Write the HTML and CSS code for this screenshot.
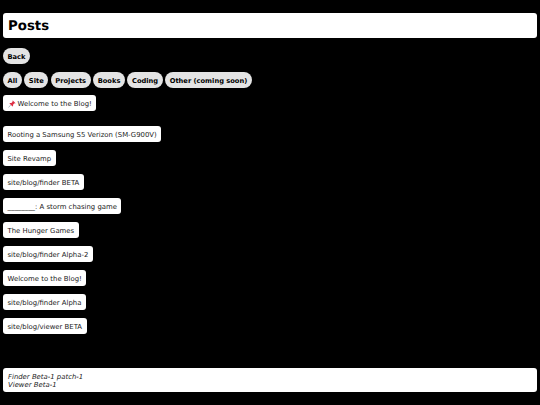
FILE: index.html
```html
<!DOCTYPE html>
<html lang="en">
    <head>
        <meta charset="UTF-8">
        <meta name="viewport" content="width=device-width, initial-scale=1.0">
        <title>Posts</title>
        <link rel="stylesheet" href="styles.css">
    </head>
    <body>
        <header class="title"><h1>Posts</h1></header>
        <nav class="back">
            <button class="pill">Back</button>
        </nav>
        <nav class="filters">
            <button class="pill">All</button>
            <button class="pill">Site</button>
            <button class="pill">Projects</button>
            <button class="pill">Books</button>
            <button class="pill">Coding</button>
            <button class="pill">Other (coming soon)</button>
        </nav>
        <div class="posts posts--pinned">
            <a class="post">
                <svg class="pin" viewBox="0 0 12 12" width="8" height="8">
                    <path d="M7.2 0.6 L11.4 4.8 L10.4 5.4 L9.5 5 L7.6 7 L7.6 9 L6.8 9.8 L2.2 5.2 L3 4.4 L5 4.4 L7 2.5 L6.6 1.6 Z" fill="#dd2e44"/>
                    <path d="M4 7.6 L0.8 11.2" stroke="#99aab5" stroke-width="1.2" fill="none"/>
                </svg>
                Welcome to the Blog!
            </a>
        </div>
        <div class="posts">
            <a class="post">Rooting a Samsung S5 Verizon (SM-G900V)</a>
            <a class="post">Site Revamp</a>
            <a class="post">site/blog/finder BETA</a>
            <a class="post">________: A storm chasing game</a>
            <a class="post">The Hunger Games</a>
            <a class="post">site/blog/finder Alpha-2</a>
            <a class="post">Welcome to the Blog!</a>
            <a class="post">site/blog/finder Alpha</a>
            <a class="post">site/blog/viewer BETA</a>
        </div>
        <footer class="versions">
            <em>Finder Beta-1 patch-1</em>
            <em>Viewer Beta-1</em>
        </footer>
    </body>
</html>
```
FILE: styles.css
```css
* {
    box-sizing: border-box;
}

html {
    background: #000;
}

body {
    margin: 0;
    padding: 13px 3px 0;
    height: 405px;
    overflow: hidden;
    background: #000;
    font-family: "DejaVu Sans", Verdana, sans-serif;
    font-size: 6.9px;
    color: #222;
    text-rendering: geometricPrecision;
}

.title {
    height: 25px;
    padding: 1px 5px 0;
    display: flex;
    align-items: center;
    background: #fff;
    border-radius: 3px;
}

.title h1 {
    margin: 0;
    font-size: 13.3px;
    font-weight: bold;
    color: #000;
}

.back {
    display: flex;
    margin-top: 10px;
}

.filters {
    display: flex;
    gap: 2.6px;
    margin-top: 8px;
}

.pill {
    height: 16px;
    padding: 1px 4.5px 0;
    border: 0;
    border-radius: 8px;
    background: #e4e4e4;
    color: #000;
    font-family: inherit;
    font-size: 6.7px;
    font-weight: bold;
}

.posts {
    display: flex;
    flex-direction: column;
    align-items: flex-start;
    gap: 8px;
}

.posts--pinned {
    margin-top: 7px;
    margin-bottom: 15px;
}

.post {
    height: 16px;
    padding: 1px 4.5px 0;
    display: flex;
    align-items: center;
    gap: 2px;
    background: #fff;
    border-radius: 3px;
}

.versions {
    display: flex;
    flex-direction: column;
    justify-content: center;
    height: 24px;
    margin-top: 34px;
    padding: 1px 5px 0;
    background: #fff;
    border-radius: 3px;
    line-height: 8px;
}
```
